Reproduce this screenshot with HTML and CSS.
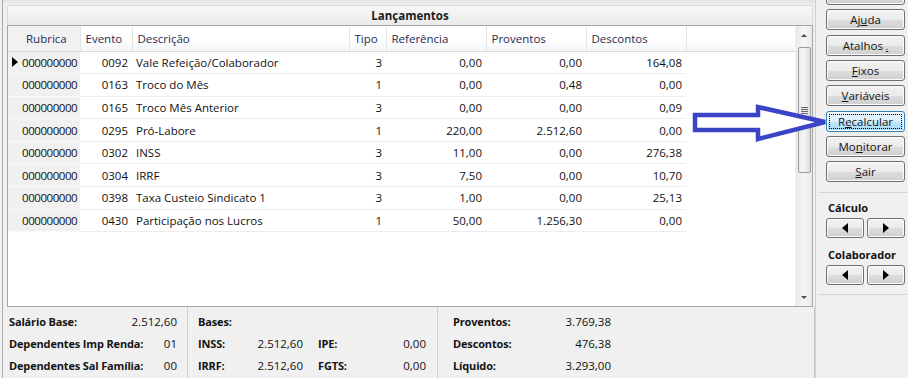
FILE: index.html
```html
<!DOCTYPE html>
<html lang="pt-BR">

<head>
    <meta charset="UTF-8">
    <title>Lançamentos</title>
    <link rel="stylesheet" href="styles.css">
</head>

<body>
    <div class="window">
        <div class="main">
            <div class="title">Lançamentos</div>

            <div class="grid">
                <div class="grid-body">
                    <table class="lanc">
                        <colgroup>
                            <col class="c-ind">
                            <col class="c-rub">
                            <col class="c-evt">
                            <col class="c-desc">
                            <col class="c-tipo">
                            <col class="c-num">
                            <col class="c-num">
                            <col class="c-num">
                            <col>
                        </colgroup>
                        <thead>
                            <tr>
                                <th class="fixed"></th>
                                <th class="fixed">Rubrica</th>
                                <th>Evento</th>
                                <th>Descrição</th>
                                <th>Tipo</th>
                                <th>Referência</th>
                                <th>Proventos</th>
                                <th>Descontos</th>
                                <th class="filler"></th>
                            </tr>
                        </thead>
                        <tbody>
                            <tr>
                                <td class="ind"><span class="cur"></span></td>
                                <td class="rub">000000000</td>
                                <td class="r">0092</td>
                                <td>Vale Refeição/Colaborador</td>
                                <td class="r">3</td>
                                <td class="r">0,00</td>
                                <td class="r">0,00</td>
                                <td class="r">164,08</td>
                                <td class="filler"></td>
                            </tr>
                            <tr>
                                <td class="ind"></td>
                                <td class="rub">000000000</td>
                                <td class="r">0163</td>
                                <td>Troco do Mês</td>
                                <td class="r">1</td>
                                <td class="r">0,00</td>
                                <td class="r">0,48</td>
                                <td class="r">0,00</td>
                                <td class="filler"></td>
                            </tr>
                            <tr>
                                <td class="ind"></td>
                                <td class="rub">000000000</td>
                                <td class="r">0165</td>
                                <td>Troco Mês Anterior</td>
                                <td class="r">3</td>
                                <td class="r">0,00</td>
                                <td class="r">0,00</td>
                                <td class="r">0,09</td>
                                <td class="filler"></td>
                            </tr>
                            <tr>
                                <td class="ind"></td>
                                <td class="rub">000000000</td>
                                <td class="r">0295</td>
                                <td>Pró-Labore</td>
                                <td class="r">1</td>
                                <td class="r">220,00</td>
                                <td class="r">2.512,60</td>
                                <td class="r">0,00</td>
                                <td class="filler"></td>
                            </tr>
                            <tr>
                                <td class="ind"></td>
                                <td class="rub">000000000</td>
                                <td class="r">0302</td>
                                <td>INSS</td>
                                <td class="r">3</td>
                                <td class="r">11,00</td>
                                <td class="r">0,00</td>
                                <td class="r">276,38</td>
                                <td class="filler"></td>
                            </tr>
                            <tr>
                                <td class="ind"></td>
                                <td class="rub">000000000</td>
                                <td class="r">0304</td>
                                <td>IRRF</td>
                                <td class="r">3</td>
                                <td class="r">7,50</td>
                                <td class="r">0,00</td>
                                <td class="r">10,70</td>
                                <td class="filler"></td>
                            </tr>
                            <tr>
                                <td class="ind"></td>
                                <td class="rub">000000000</td>
                                <td class="r">0398</td>
                                <td>Taxa Custeio Sindicato 1</td>
                                <td class="r">3</td>
                                <td class="r">1,00</td>
                                <td class="r">0,00</td>
                                <td class="r">25,13</td>
                                <td class="filler"></td>
                            </tr>
                            <tr>
                                <td class="ind"></td>
                                <td class="rub">000000000</td>
                                <td class="r">0430</td>
                                <td>Participação nos Lucros</td>
                                <td class="r">1</td>
                                <td class="r">50,00</td>
                                <td class="r">1.256,30</td>
                                <td class="r">0,00</td>
                                <td class="filler"></td>
                            </tr>
                        </tbody>
                    </table>
                </div>

                <div class="scrollbar">
                    <div class="sb-btn"><span class="tri-up"></span></div>
                    <div class="sb-track">
                        <div class="sb-thumb"><span class="grip"></span></div>
                    </div>
                    <div class="sb-btn"><span class="tri-down"></span></div>
                </div>
            </div>

            <div class="totals">
                <div class="tot tot-sal">
                    <b>Salário Base:</b><span class="v">2.512,60</span>
                    <b>Dependentes Imp Renda:</b><span class="v">01</span>
                    <b>Dependentes Sal Família:</b><span class="v">00</span>
                </div>
                <div class="tot tot-bases">
                    <b class="span-all">Bases:</b>
                    <b>INSS:</b><span class="v">2.512,60</span><b>IPE:</b><span class="v">0,00</span>
                    <b>IRRF:</b><span class="v">2.512,60</span><b>FGTS:</b><span class="v">0,00</span>
                </div>
                <div class="tot tot-liq">
                    <b>Proventos:</b><span class="v">3.769,38</span>
                    <b>Descontos:</b><span class="v">476,38</span>
                    <b>Líquido:</b><span class="v">3.293,00</span>
                </div>
            </div>
        </div>

        <div class="side">
            <div class="buttons">
                <button class="btn hidden-top"></button>
                <button class="btn">Aj<u>u</u>da</button>
                <button class="btn">Atalhos <u class="small">.</u></button>
                <button class="btn"><u>F</u>ixos</button>
                <button class="btn"><u>V</u>ariáveis</button>
                <button class="btn focus"><span class="focus-ring">R<u>e</u>calcular</span></button>
                <button class="btn">Mo<u>n</u>itorar</button>
                <button class="btn"><u>S</u>air</button>
            </div>

            <div class="nav">
                <div class="nav-label">Cálculo</div>
                <div class="nav-row">
                    <button class="btn nav-btn"><span class="tri-left"></span></button>
                    <button class="btn nav-btn"><span class="tri-right"></span></button>
                </div>
                <div class="nav-label">Colaborador</div>
                <div class="nav-row">
                    <button class="btn nav-btn"><span class="tri-left"></span></button>
                    <button class="btn nav-btn"><span class="tri-right"></span></button>
                </div>
            </div>
        </div>
    </div>

    <!-- hand drawn arrow pointing at Recalcular -->
    <svg class="arrow" width="150" height="50" viewBox="0 0 150 50">
        <polygon points="5,15 68,15 68,7 135,22 68,39 68,30 5,30" fill="#fff" stroke="#3b44c6" stroke-width="4.5" stroke-linejoin="miter"/>
    </svg>
</body>

</html>
```

FILE: styles.css
```css
* {
    box-sizing: border-box;
}

body {
    margin: 0;
    width: 908px;
    height: 378px;
    overflow: hidden;
    position: relative;
    background: #f0f0f0;
    font-family: "Open Sans", "Noto Sans", sans-serif;
    font-size: 11.5px;
    color: #111;
}

.window {
    display: flex;
    height: 378px;
}

/* left part: title, grid, totals */
.main {
    width: 813px;
    margin-left: 2px;
    border-left: 1px solid #a9a9a9;
    padding: 5px 2px 0 4px;
    display: flex;
    flex-direction: column;
    background: linear-gradient(#e6e6e6 0, #e6e6e6 3px, #f0f0f0 4px);
}

.title {
    height: 20px;
    line-height: 19px;
    text-align: center;
    font-weight: bold;
    color: #1c1c1c;
    border: 1px solid #dadada;
    border-bottom: none;
    border-radius: 2px 2px 0 0;
    background: linear-gradient(#f7f7f7, #ebebeb);
}

.grid {
    height: 282px;
    display: flex;
    border: 1px solid #a5a5a5;
    background: #fff;
}

.grid-body {
    width: 787px;
    overflow: hidden;
}

.lanc {
    border-collapse: collapse;
    table-layout: fixed;
    width: 787px;
}

.c-ind { width: 14px; }
.c-rub { width: 58px; }
.c-evt { width: 52px; }
.c-desc { width: 217px; }
.c-tipo { width: 37px; }
.c-num { width: 100px; }

.lanc th {
    height: 25px;
    padding: 0 0 0 5px;
    text-align: left;
    font-weight: normal;
    color: #1f2b55;
    white-space: nowrap;
    background: linear-gradient(#ffffff 0, #ffffff 50%, #f4f5f7 100%);
    border-right: 1px solid #e3e4e6;
    border-bottom: 1px solid #d8d8d8;
}

.lanc th.fixed {
    background: #f1f1f1;
    border-right: none;
}

.lanc th.fixed + th.fixed {
    padding-left: 4px;
    border-right: 1px solid #e3e4e6;
}

.lanc th.filler {
    border-right: none;
}

.lanc td {
    height: 22.6px;
    padding: 0 4px 0 4px;
    white-space: nowrap;
    border-bottom: 1px solid #ececec;
}

.lanc td.r {
    text-align: right;
}

.lanc td.ind,
.lanc td.rub {
    background: #f0f0f0;
    border-bottom: 1px solid #fafafa;
}

.lanc td.ind {
    padding: 0;
}

.lanc td.rub {
    padding: 0 3px 0 0;
    text-align: right;
    letter-spacing: -0.45px;
}

.lanc td.filler {
    border-bottom: none;
}

.cur {
    display: block;
    margin-left: 4px;
    width: 0;
    height: 0;
    border-top: 5px solid transparent;
    border-bottom: 5px solid transparent;
    border-left: 6px solid #000;
}

/* vertical scrollbar */
.scrollbar {
    width: 17px;
    display: flex;
    flex-direction: column;
    background: linear-gradient(90deg, #e8e8e8, #f4f4f4 40%, #f4f4f4 60%, #e8e8e8);
    border-left: 1px solid #f0f0f0;
}

.sb-btn {
    height: 18px;
    display: flex;
    align-items: center;
    justify-content: center;
}

.tri-up,
.tri-down {
    width: 0;
    height: 0;
    border-left: 3px solid transparent;
    border-right: 3px solid transparent;
}

.tri-up {
    border-bottom: 3px solid #4d4d4d;
}

.tri-down {
    border-top: 3px solid #4d4d4d;
}

.sb-track {
    flex: 1;
    padding: 3px 1px 0 2px;
}

.sb-thumb {
    height: 126px;
    border: 1px solid #9b9b9b;
    border-radius: 2px;
    background: linear-gradient(90deg, #ececec, #f6f6f6 45%, #dcdcdc);
    display: flex;
    align-items: center;
    justify-content: center;
}

.grip {
    width: 7px;
    height: 7px;
    background: repeating-linear-gradient(#6b6b6b 0, #6b6b6b 1px, #e6e6e6 1px, #e6e6e6 2px);
}

/* totals under the grid */
.totals {
    flex: 1;
    display: flex;
    margin: 0 -2px 0 0;
    padding-top: 3px;
    border-right: 1px solid #c8c8c8;
}

.tot {
    display: grid;
    grid-auto-rows: 22px;
    align-items: center;
    align-content: start;
    white-space: nowrap;
    margin-top: -3px;
    padding-top: 3px;
}

.tot b {
    color: #141414;
    font-size: 11px;
    letter-spacing: -0.15px;
}

.tot .v {
    text-align: right;
}

.tot-sal {
    width: 181px;
    grid-template-columns: minmax(0, 1fr) auto;
    padding-left: 2px;
    padding-right: 10px;
    border-right: 1px solid #cfcfcf;
}

.tot-bases {
    width: 250px;
    grid-template-columns: 50px 55px 15px 55px 53px;
    padding-left: 10px;
    border-right: 1px solid #cfcfcf;
}

.tot-bases b:nth-of-type(3),
.tot-bases b:nth-of-type(5) {
    grid-column: 4;
}

.tot-bases .span-all {
    grid-column: 1 / -1;
}

.tot-liq {
    flex: 1;
    grid-template-columns: 97px 61px;
    padding-left: 15px;
}

/* right column with the buttons */
.side {
    flex: 1;
    border-left: 1px solid #cfcfcf;
    padding-left: 10px;
}

.buttons {
    display: flex;
    flex-direction: column;
    gap: 4.33px;
    margin-top: -16px;
    padding-bottom: 10px;
    border-bottom: 1px solid #d2d2d2;
    margin-left: -7px;
    padding-left: 7px;
}

.btn {
    width: 79px;
    height: 21px;
    padding: 0;
    font-family: inherit;
    font-size: 11.5px;
    color: #141414;
    border: 1px solid #707070;
    border-radius: 3px;
    background: linear-gradient(#f2f2f2 0, #ebebeb 50%, #dddddd 51%, #cfcfcf 100%);
    box-shadow: inset 0 0 0 1px #fbfbfb;
}

.btn u {
    text-underline-offset: 1px;
}

.btn u.small {
    font-size: 9px;
}

.btn.focus {
    border-color: #3c7fb1;
    background: linear-gradient(#eaf6fd 0, #d9f0fc 50%, #bee6fd 51%, #a7d9f5 100%);
    box-shadow: inset 0 0 0 1px #fbfdfe;
}

.focus-ring {
    display: block;
    margin: 2px;
    height: 15px;
    line-height: 13px;
    border: 1px dotted #000;
}

.nav {
    padding-top: 7px;
    padding-bottom: 9px;
    border-bottom: 1px solid #d2d2d2;
    margin-left: -7px;
    padding-left: 9px;
}

.nav-label {
    font-weight: bold;
    font-size: 11px;
    height: 15px;
    line-height: 15px;
}

.nav-row {
    display: flex;
    gap: 3px;
    margin: 3px 0 9px -2px;
}

.nav-row:last-child {
    margin-bottom: 0;
}

.nav-btn {
    width: 38px;
    height: 20px;
    display: flex;
    align-items: center;
    justify-content: center;
}

.tri-left,
.tri-right {
    width: 0;
    height: 0;
    border-top: 5px solid transparent;
    border-bottom: 5px solid transparent;
}

.tri-left {
    border-right: 6px solid #000;
}

.tri-right {
    border-left: 6px solid #000;
}

.arrow {
    position: absolute;
    left: 690px;
    top: 100px;
}
```
